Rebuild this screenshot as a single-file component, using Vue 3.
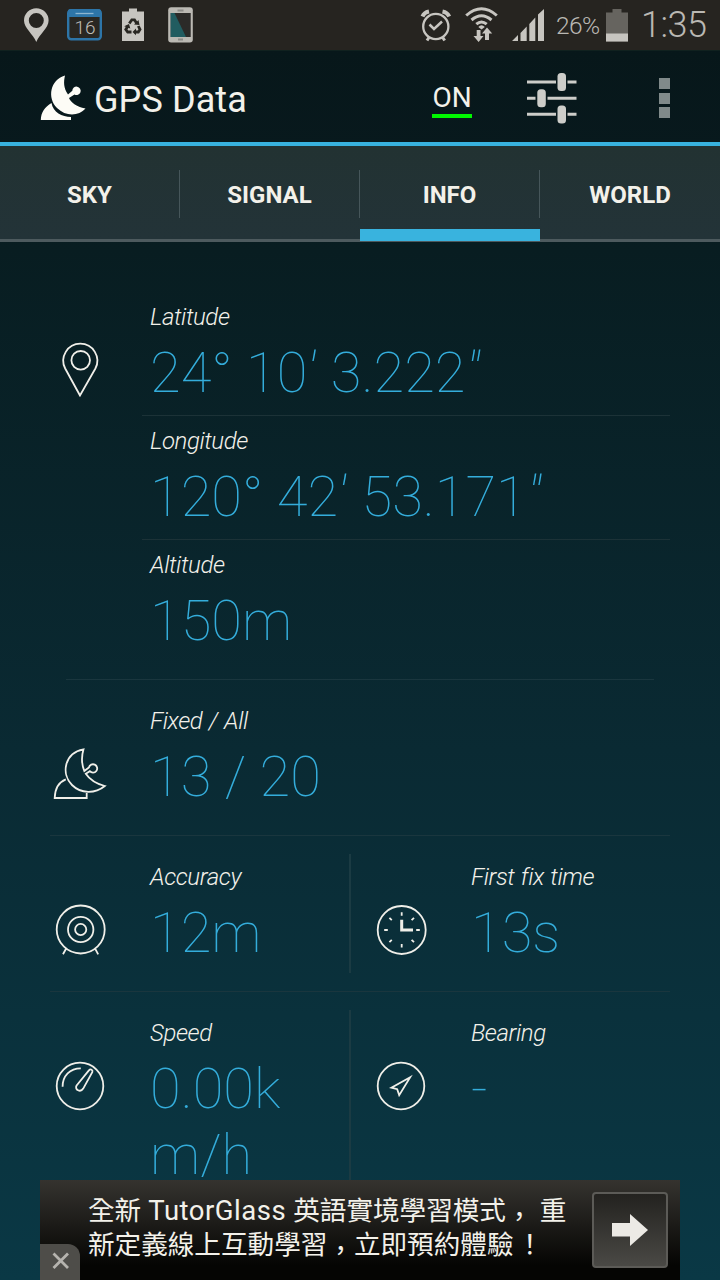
<script setup>
import { ref } from "vue";

const tabs = ["SKY", "SIGNAL", "INFO", "WORLD"];
const activeTab = ref("INFO");

// line icons, drawn in a 60x60 box
const icons = {
  pin: "M30 55.5L15.2 28.5A17 17 0 1 1 45.4 28.5ZM40 20.3A9.3 9.3 0 1 1 21.4 20.3A9.3 9.3 0 1 1 40 20.3Z",
  dish: "M33.5 5.3C14 9 11 30 22 41C31 50 45 50 54.8 42C45 39.5 40 36 35.8 29.8L39.8 27.2A4.2 4.2 0 1 0 38.9 23.5L34.3 27C31.5 20 31.5 12 33.5 5.3ZM15.8 35.3C9 38 5 44 4.7 54H36.7V49",
  target: "M54.7 29.5A24 24 0 1 1 6.7 29.5A24 24 0 1 1 54.7 29.5ZM43.4 29.5A12.7 12.7 0 1 1 18 29.5A12.7 12.7 0 1 1 43.4 29.5ZM36.3 29.5A5.6 5.6 0 1 1 25.1 29.5A5.6 5.6 0 1 1 36.3 29.5ZM16.3 48.3L13 54.3M45 48.3L48.2 54.3",
  clock: "M54.7 30A24 24 0 1 1 6.7 30A24 24 0 1 1 54.7 30ZM30.7 12.2V15.8M30.7 44V47.5M13.2 30H16.8M45.2 30H48.8M18.4 17.8L20.8 20.2M43 17.8L40.6 20.2M18.4 42.2L20.8 39.8M43 42.2L40.6 39.8",
  gauge: "M53.3 30A23.3 23.3 0 1 1 6.7 30A23.3 23.3 0 1 1 53.3 30ZM12.6 30.7C12.6 20 20 12.3 30.8 12.3M26.6 29.5L38.9 14.4C40.6 12.2 43.2 14 42.3 16.2L33.2 32.6C30.5 36.8 24.2 33.8 26.6 29.5Z",
  arrow: "M53.3 30A23.3 23.3 0 1 1 6.7 30A23.3 23.3 0 1 1 53.3 30ZM39.2 21.2L20.4 31.7L26.2 33.2L28.2 39.2Z",
};

const position = [
  { label: "Latitude", value: "24° 10' 3.222\"" },
  { label: "Longitude", value: "120° 42' 53.171\"" },
  { label: "Altitude", value: "150m" },
];

const rows = [
  [{ label: "Fixed / All", value: "13 / 20", icon: "dish" }],
  [
    { label: "Accuracy", value: "12m", icon: "target" },
    { label: "First fix time", value: "13s", icon: "clock" },
  ],
  [
    { label: "Speed", value: "0.00k\nm/h", icon: "gauge" },
    { label: "Bearing", value: "-", icon: "arrow" },
  ],
];

// splits off the minute and second marks, they are slanted
const parts = (value) => value.split(/(['"])/).filter(Boolean);
const isMark = (part) => part === "'" || part === '"';
</script>

<template>
  <div class="screen">
    <!-- status bar -->
    <div class="status-bar">
      <svg class="status-left" width="200" height="50" viewBox="0 0 200 50">
        <path fill="#c7c5c0" fill-rule="evenodd" d="M36.3 42C33 34 24 28 24 20.5A12.3 12.3 0 0 1 48.6 20.5C48.6 28 39.5 34 36.3 42ZM43.8 20.5A7.5 7.5 0 1 0 28.8 20.5A7.5 7.5 0 1 0 43.8 20.5Z" />
        <rect x="68.2" y="10.2" width="32.6" height="29" rx="3" fill="#292722" stroke="#2d75a8" stroke-width="2.4" />
        <path d="M68 17V11Q68 9 71 9H98Q101 9 101 11V17Z" fill="#2d75a8" />
        <path d="M75.5 13.5H93.5" stroke="#8db6d0" stroke-width="1.3" />
        <text x="85" y="34" class="calendar-day">16</text>
        <path d="M122 11.5H129V8.5H137V11.5H144V41H122Z" fill="#c7c5c0" />
        <g fill="none" stroke="#292722" stroke-width="2.8">
          <path d="M129.3 23.5L131.8 19.8H134.5L136.8 23.4" />
          <path d="M138.3 26L140 29.5L138.3 32H134.5" />
          <path d="M131.5 32H127.7L125.8 29.5L128 26" />
        </g>
        <path fill="#292722" d="M134 24.5L139.5 25L138.5 20ZM136 28.5L132.5 32L136 35.2ZM124.2 26.3L129 24L130.3 28.5Z" />
        <rect x="168.2" y="7.2" width="24.6" height="35.3" rx="3" fill="#bbb9b3" />
        <rect x="170.7" y="13" width="20" height="24" fill="#2b2a28" />
        <path d="M170.7 13H174.5L186 37H170.7Z" fill="#215c60" />
        <path d="M177.5 10.5H183.5M178 39.5H183" stroke="#8c8b87" stroke-width="1.8" />
      </svg>
      <svg class="status-right" width="146" height="50" viewBox="400 0 146 50">
        <g fill="none" stroke="#c7c5c0">
          <circle cx="435.8" cy="26.5" r="12.6" stroke-width="2.3" />
          <path d="M429.5 24.5L434 29L442 21.5" stroke-width="2.5" />
          <path d="M422.5 16.5Q424 12.5 429 11.5M449.2 16.5Q447.5 12.5 442.5 11.5" stroke-width="4" />
          <path d="M429 37.5L427 40.5M442.7 37.5L444.7 40.5" stroke-width="3" />
          <path d="M466.2 15.5Q481.5 2 496.8 15.5M471.5 20Q481.5 11.5 491.5 20M476.3 24.2Q481.5 19.8 486.7 24.2" stroke-width="3" />
        </g>
        <path d="M478.3 27Q481.5 23.5 484.8 27L481.5 29.5Z" fill="#c7c5c0" />
        <path fill="#c7c5c0" d="M476.7 30H480.5V36H483.5L478.6 42L473.5 36H476.7ZM485 40H489V33.5H492.2L487 27.5L482 33.5H485Z" />
        <path fill="#c7c5c0" d="M512 41L518 35V41ZM520.5 41V33L526.7 26.5V41ZM529.3 41V24L535.3 17.5V41ZM538 41V14.5L544 9V41Z" />
      </svg>
      <span class="battery-text">26%</span>
      <svg class="battery" width="22" height="33" viewBox="0 0 22 33">
        <path d="M0 3.5H6.5V0H15.5V3.5H22V32.5H0Z" fill="#66645f" />
        <path d="M0 24.5H22V32.5H0Z" fill="#c7c5c0" />
      </svg>
      <span class="clock">1:35</span>
    </div>

    <!-- action bar -->
    <header class="action-bar">
      <svg class="logo" width="46" height="46" viewBox="0 0 46 46">
        <path fill="#fdfcf6" d="M25 0.5C10 5 7 23 17 33C26 42 39 41 45.5 33.5C36 31.5 31 27.5 29 23L34.5 19.5A4.2 4.2 0 1 0 32.3 15.8L28 19.5C23.5 13 23.5 7 25 .5Z" />
        <path fill="#fdfcf6" d="M11.5 28C5 32 1 37 .8 45H31V42C22 42 13 37 11.5 28Z" />
      </svg>
      <h1 class="title">GPS Data</h1>
      <span class="toggle">ON</span>
      <svg class="sliders" width="50" height="52" viewBox="0 0 50 52">
        <path d="M0 10H29M40.5 10H49.5M0 26.2H8.5M20.5 26.2H49.5M0 42.3H29M40.5 42.3H49.5" stroke="#cdcdc9" stroke-width="3" />
        <g fill="#cdcdc9">
          <rect x="30.5" y="1" width="8.5" height="18" rx="3.5" />
          <rect x="10.3" y="17.3" width="8.5" height="18" rx="3.5" />
          <rect x="30.5" y="33.5" width="8.5" height="18" rx="3.5" />
        </g>
      </svg>
      <div class="overflow"><i></i><i></i><i></i></div>
    </header>

    <nav class="tabs">
      <div
        v-for="tab in tabs"
        :key="tab"
        class="tab"
        :class="{ active: tab === activeTab }"
        @click="activeTab = tab"
      >
        {{ tab }}
      </div>
    </nav>

    <main class="content">
      <section class="position">
        <svg class="icon" viewBox="0 0 60 60"><path :d="icons.pin" /></svg>
        <div class="position-list">
          <div v-for="item in position" :key="item.label" class="position-item">
            <div class="label">{{ item.label }}</div>
            <div class="value">
              <span v-for="(part, i) in parts(item.value)" :key="i" :class="{ mark: isMark(part), seconds: part === '&quot;' }">{{ part }}</span>
            </div>
          </div>
        </div>
      </section>
      <section v-for="(row, index) in rows" :key="index" class="row">
        <div v-for="cell in row" :key="cell.label" class="cell">
          <svg class="icon" viewBox="0 0 60 60">
            <path :d="icons[cell.icon]" />
            <path v-if="cell.icon === 'clock'" class="hands" d="M30.7 19.8V30H42" />
          </svg>
          <div class="cell-text">
            <div class="label">{{ cell.label }}</div>
            <div class="value">{{ cell.value }}</div>
          </div>
        </div>
      </section>
    </main>

    <!-- ad banner -->
    <div class="ad">
      <p class="ad-text">全新 <span class="latin">TutorGlass</span> 英語實境學習模式<span class="punct">，</span> 重<br />新定義線上互動學習<span class="punct">，</span>立即預約體驗<span class="bang">！</span></p>
      <div class="ad-button">
        <svg width="36" height="32" viewBox="0 0 36 32"><path d="M0 9H18V0L36 16L18 32V22.5H0Z" fill="#eceae5" /></svg>
      </div>
      <div class="ad-close">
        <svg width="18" height="18" viewBox="0 0 18 18"><path d="M1.5 1.5L16 16M16 1.5L1.5 16" stroke="#b5b3ae" stroke-width="2.8" /></svg>
      </div>
    </div>
  </div>
</template>

<style>
body {
  margin: 0;
  background: #0a3642;
}
</style>

<style scoped>
.screen {
  position: relative;
  display: flex;
  flex-direction: column;
  width: 720px;
  height: 1280px;
  overflow: hidden;
  background: linear-gradient(#07171a 50px, #08191d 150px, #081d21 250px, #0a2a33 750px, #0a3845 1280px);
  color: #f3f1ea;
  font-family: Roboto, "Noto Sans CJK TC", sans-serif;
}

.status-bar {
  display: flex;
  align-items: center;
  flex: none;
  height: 50px;
  border-bottom: 1px solid #10211f;
  background: #262420;
  color: #bab8b3;
}

.status-right {
  margin-left: 200px;
}

.calendar-day {
  fill: #bfbdb8;
  font-size: 19px;
  font-weight: 300;
  text-anchor: middle;
}

.battery-text {
  width: 44px;
  margin: 1px 0 0 10px;
  font-size: 24.5px;
  font-weight: 350;
  letter-spacing: -0.6px;
}

.battery {
  margin-left: 6px;
}

.clock {
  margin-left: 13px;
  font-size: 36px;
  font-weight: 300;
  line-height: 50px;
  letter-spacing: -0.5px;
}

.action-bar {
  display: flex;
  align-items: center;
  flex: none;
  box-sizing: border-box;
  height: 95px;
  padding-left: 40px;
  border-bottom: 4px solid #38b2de;
}

.logo {
  margin-top: 3px;
}

.title {
  width: 338px;
  margin: 6px 0 0 8px;
  font-size: 36px;
  font-weight: 400;
  line-height: 42px;
  letter-spacing: 0.1px;
}

.toggle {
  box-sizing: border-box;
  width: 40px;
  height: 38px;
  padding-top: 3px;
  margin-top: 5px;
  border-bottom: 4px solid #00f800;
  font-size: 28px;
  line-height: 30px;
  text-align: center;
}

.sliders {
  margin: 2px 0 0 55px;
}

.overflow {
  display: flex;
  flex-direction: column;
  gap: 3.5px;
  margin: 3px 0 0 82px;
}

.overflow i {
  width: 11px;
  height: 11px;
  background: #808a8a;
}

.tabs {
  display: grid;
  grid-template-columns: repeat(4, 180px);
  flex: none;
  box-sizing: border-box;
  height: 96px;
  border-bottom: 3px solid #4d5a5e;
  background: linear-gradient(#223232, #233338);
}

.tab {
  position: relative;
  box-sizing: border-box;
  height: 96px;
  padding-right: 1px;
  font-size: 24px;
  font-weight: 700;
  line-height: 98px;
  text-align: center;
}

.tab:last-child {
  padding-right: 0;
}

.tab:not(:last-child)::after {
  position: absolute;
  top: 24px;
  right: 0;
  width: 1px;
  height: 48px;
  background: #46565a;
  content: "";
}

.tab.active::before {
  position: absolute;
  right: 0;
  bottom: 1px;
  left: 0;
  height: 12px;
  background: #39b3de;
  content: "";
}

.content {
  padding: 50px 50px 0;
}

.position {
  display: flex;
  height: 387px;
}

.icon {
  flex: none;
  width: 60px;
  height: 60px;
  margin-top: 48px;
  fill: none;
  stroke: #f0efe9;
  stroke-width: 1.8;
}

.icon .hands {
  stroke-width: 3;
}

.position-list {
  width: 528px;
  margin-left: 32px;
}

.position-item {
  padding: 11px 0 9px 8px;
  border-bottom: 1px solid #1c3237;
}

.position-item:last-child {
  border-bottom: 0;
}

.label {
  font-size: 24px;
  font-style: italic;
  font-weight: 300;
  line-height: 29px;
  letter-spacing: -0.4px;
  word-spacing: 1px;
  white-space: nowrap;
}

.value {
  margin-top: 8px;
  color: #34addb;
  font-size: 56px;
  font-weight: 100;
  line-height: 66px;
  white-space: pre;
}

.position .value {
  display: flex;
}

.mark {
  margin: 0 2px 0 -1px;
  font-style: italic;
}

.seconds {
  margin-left: 0;
}

.row {
  display: flex;
  box-sizing: border-box;
  height: 156px;
  border-top: 1px solid #1a363e;
}

.row:nth-child(2) {
  border-image: linear-gradient(90deg, transparent 17px, #1a363e 17px, #1a363e 603px, transparent 603px) 1;
}

.row:last-child {
  height: 240px;
}

.cell {
  display: flex;
  position: relative;
  flex: none;
  width: 321px;
}

.cell .icon {
  margin-top: 64px;
}

.cell-text {
  padding: 27px 0 0 40px;
}

/* separator between the two cells of a row */
.cell + .cell::before {
  position: absolute;
  top: 18px;
  left: -22px;
  width: 2px;
  height: 119px;
  background: #1b3b43;
  content: "";
}

.row:last-child .cell + .cell::before {
  height: 200px;
}

.ad {
  position: absolute;
  bottom: 0;
  left: 40px;
  display: flex;
  justify-content: space-between;
  box-sizing: border-box;
  width: 640px;
  height: 100px;
  padding: 12px 12px 0 48px;
  background: linear-gradient(#35332f, #050503 85%);
}

.ad-text {
  margin: 2px 0 0;
  font-size: 26.6px;
  line-height: 34px;
  white-space: nowrap;
  word-spacing: 0.5px;
}

.latin {
  font-size: 27.5px;
  line-height: 0;
  letter-spacing: 0.5px;
}

/* the full-width comma sits low in its cell */
.punct {
  line-height: 0;
  vertical-align: -6px;
}

.bang {
  margin-left: 3px;
}

.ad-button {
  display: flex;
  align-items: center;
  justify-content: center;
  box-sizing: border-box;
  width: 76px;
  height: 76px;
  border: 2px solid #5c5b57;
  border-radius: 4px;
  background: linear-gradient(#23221f, #4a4945);
}

.ad-close {
  position: absolute;
  bottom: 0;
  left: 0;
  display: flex;
  align-items: center;
  justify-content: center;
  box-sizing: border-box;
  width: 40px;
  height: 36px;
  padding: 0 0 3px 2px;
  border-top-right-radius: 12px;
  background: #4e4d49;
}
</style>
